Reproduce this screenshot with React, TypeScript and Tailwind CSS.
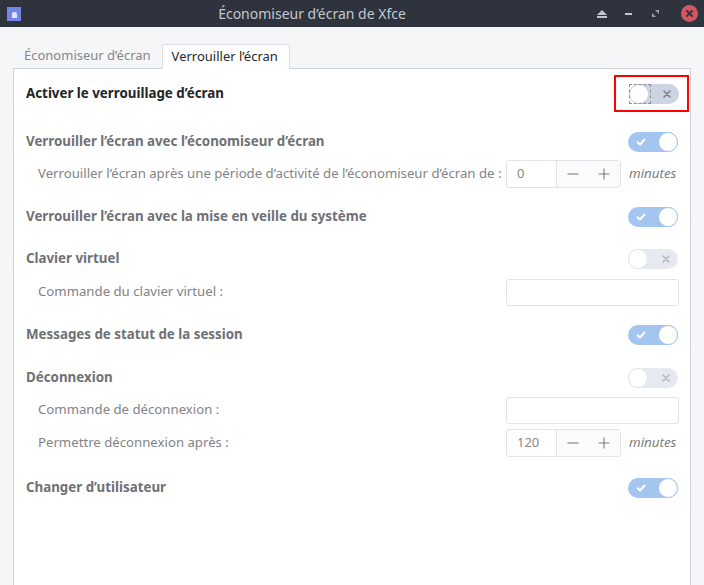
import React from 'react';

const font = { fontFamily: '"Noto Sans", "Open Sans", sans-serif' };

type ToggleProps = { on: boolean; disabled?: boolean; focus?: boolean };

const Toggle = ({ on, disabled, focus }: ToggleProps) => {
  if (on) {
    return (
      <div className="relative flex h-[20px] w-[50px] shrink-0 items-center rounded-full bg-[#a4c5f0]">
        <svg className="ml-[8px]" width="10" height="10" viewBox="0 0 10 10">
          <path d="M1.5 5.2 L4 7.5 L8.5 2.5" fill="none" stroke="#ffffff" strokeWidth="1.9" strokeLinecap="round" strokeLinejoin="round" />
        </svg>
        <div className="absolute right-0 top-0 h-[20px] w-[20px] rounded-full border border-[#a4c5f0] bg-white" />
      </div>
    );
  }
  return (
    <div
      className={
        disabled
          ? 'relative flex h-[20px] w-[50px] shrink-0 items-center justify-end rounded-full bg-[#e6e9f0]'
          : 'relative flex h-[20px] w-[50px] shrink-0 items-center justify-end rounded-full bg-[#cdd3e1]'
      }
    >
      <svg className="mr-[8px]" width="8" height="8" viewBox="0 0 8 8">
        <path
          d="M1 1 L7 7 M7 1 L1 7"
          stroke={disabled ? '#b4b8c2' : '#7b808b'}
          strokeWidth="1.6"
          strokeLinecap="round"
        />
      </svg>
      <div
        className={
          disabled
            ? 'absolute left-0 top-0 h-[20px] w-[20px] rounded-full border border-[#e2e5ec] bg-white'
            : 'absolute left-0 top-0 h-[20px] w-[20px] rounded-full border border-[#cdd3e1] bg-white'
        }
      />
      {focus && (
        <div className="absolute left-0 top-0 h-[20px] w-[22px] border border-dashed border-[#8a8f99]" />
      )}
    </div>
  );
};

const SpinBox = ({ value }: { value: string }) => (
  <div className="flex items-center">
    <div className="flex h-[28px] w-[115px] rounded-[3px] border border-[#e1e3e9] bg-white">
      <div className="flex w-[49px] items-center pl-[10px] text-[13px] text-[#85878b]">{value}</div>
      <div className="flex flex-1 border-l border-[#e1e3e9] bg-[#fbfbfc]">
        <div className="flex flex-1 items-center justify-center">
          <svg width="12" height="12" viewBox="0 0 12 12">
            <path d="M0.5 6 H11.5" stroke="#7a7d82" strokeWidth="1.1" />
          </svg>
        </div>
        <div className="flex flex-1 items-center justify-center">
          <svg width="12" height="12" viewBox="0 0 12 12">
            <path d="M0.5 6 H11.5 M6 0.5 V11.5" stroke="#7a7d82" strokeWidth="1.1" />
          </svg>
        </div>
      </div>
    </div>
    <span className="ml-[8px] text-[13.33px] italic text-[#7a7c80]">minutes</span>
  </div>
);

const Entry = () => (
  <div className="h-[27px] w-[173px] rounded-[3px] border border-[#e1e3e9] bg-white" />
);

const Heading = ({ label, dark, children, className }: { label: string; dark?: boolean; children: React.ReactNode; className?: string }) => (
  <div className={'flex items-center justify-between ' + (className ?? '')}>
    <span className={dark ? 'whitespace-nowrap text-[13.33px] font-bold text-[#222428]' : 'whitespace-nowrap text-[13.33px] font-bold text-[#6e7175]'}>{label}</span>
    {children}
  </div>
);

const SubRow = ({ label, children, className }: { label: string; children: React.ReactNode; className?: string }) => (
  <div className={'flex h-[28px] items-center justify-between ' + (className ?? '')}>
    <span className="whitespace-nowrap pl-[12px] text-[13.2px] text-[#818387]">{label}</span>
    <div className="mr-[-1px] flex w-[173px] shrink-0 justify-start">{children}</div>
  </div>
);

export default function App() {
  return (
    <div className="flex h-[585px] w-[704px] flex-col overflow-hidden bg-[#f5f6f7]" style={font}>
      {/* title bar */}
      <div className="flex h-[27px] shrink-0 items-center bg-[#2f333d]">
        <div className="ml-[7px] flex h-[14px] w-[14px] items-end justify-center bg-[#7386e8] pb-[3px]">
          <div className="h-[6px] w-[5px] rounded-t-[2px] bg-[#dfe4fb]" />
        </div>
        <div className="flex-1 pl-[6px] text-center text-[14px] text-[#c3c8d0]">Économiseur d’écran de Xfce</div>
        <div className="flex items-center">
          <svg className="mr-[18px]" width="10" height="8" viewBox="0 0 10 8">
            <path d="M5 0 L10 5 H0 Z" fill="#c3c8d0" />
            <rect x="0" y="6" width="10" height="2" fill="#c3c8d0" />
          </svg>
          <div className="mr-[20px] h-[2px] w-[7px] bg-[#c3c8d0]" />
          <svg className="mr-[22px]" width="7" height="7" viewBox="0 0 7 7">
            <path d="M7 0 V4 L3 0 Z M0 7 V3 L4 7 Z" fill="#9aa0aa" />
          </svg>
          <div className="mr-[6px] flex h-[17px] w-[17px] items-center justify-center rounded-full bg-[#d4575f]">
            <svg width="7" height="7" viewBox="0 0 7 7">
              <path d="M1 1 L6 6 M6 1 L1 6" stroke="#2f333d" strokeWidth="1.8" strokeLinecap="round" />
            </svg>
          </div>
        </div>
      </div>

      {/* tabs */}
      <div className="mt-[17px] flex h-[24px] shrink-0 items-end pl-[13px]">
        <div className="flex h-[24px] items-center px-[11px] text-[13px] text-[#85878b]">Économiseur d’écran</div>
        <div className="relative z-10 mb-[-1px] flex h-[25px] items-center border border-b-0 border-[#dcdfe4] bg-white pl-[9px] pr-[11px] text-[13px] text-[#26282c]">
          Verrouiller l’écran
        </div>
      </div>

      {/* notebook page */}
      <div className="mx-[13px] flex flex-1 flex-col border border-b-0 border-[#cfd2d7] bg-white px-[12px] pt-[1px]">
        <Heading label="Activer le verrouillage d’écran" dark className="h-[48px]">
          <div className="mr-[-11px] mt-[-1px] flex h-[37px] w-[75px] items-center border-2 border-[#ff0000] pl-[13px]">
            <Toggle on={false} focus />
          </div>
        </Heading>

        <Heading label="Verrouiller l’écran avec l’économiseur d’écran" className="mt-[12px] h-[24px]">
          <Toggle on />
        </Heading>
        <SubRow label="Verrouiller l’écran après une période d’activité de l’économiseur d’écran de :" className="mt-[6px]">
          <SpinBox value="0" />
        </SubRow>

        <Heading label="Verrouiller l’écran avec la mise en veille du système" className="mt-[17px] h-[24px]">
          <Toggle on />
        </Heading>

        <Heading label="Clavier virtuel" className="mt-[18px] h-[24px]">
          <Toggle on={false} disabled />
        </Heading>
        <SubRow label="Commande du clavier virtuel :" className="mt-[7px]">
          <Entry />
        </SubRow>

        <Heading label="Messages de statut de la session" className="mt-[17px] h-[24px]">
          <Toggle on />
        </Heading>

        <Heading label="Déconnexion" className="mt-[19px] h-[24px]">
          <Toggle on={false} disabled />
        </Heading>
        <SubRow label="Commande de déconnexion :" className="mt-[6px]">
          <Entry />
        </SubRow>
        <SubRow label="Permettre déconnexion après :" className="mt-[5px]">
          <SpinBox value="120" />
        </SubRow>

        <Heading label="Changer d’utilisateur" className="mt-[19px] h-[24px]">
          <Toggle on />
        </Heading>
      </div>
    </div>
  );
}
